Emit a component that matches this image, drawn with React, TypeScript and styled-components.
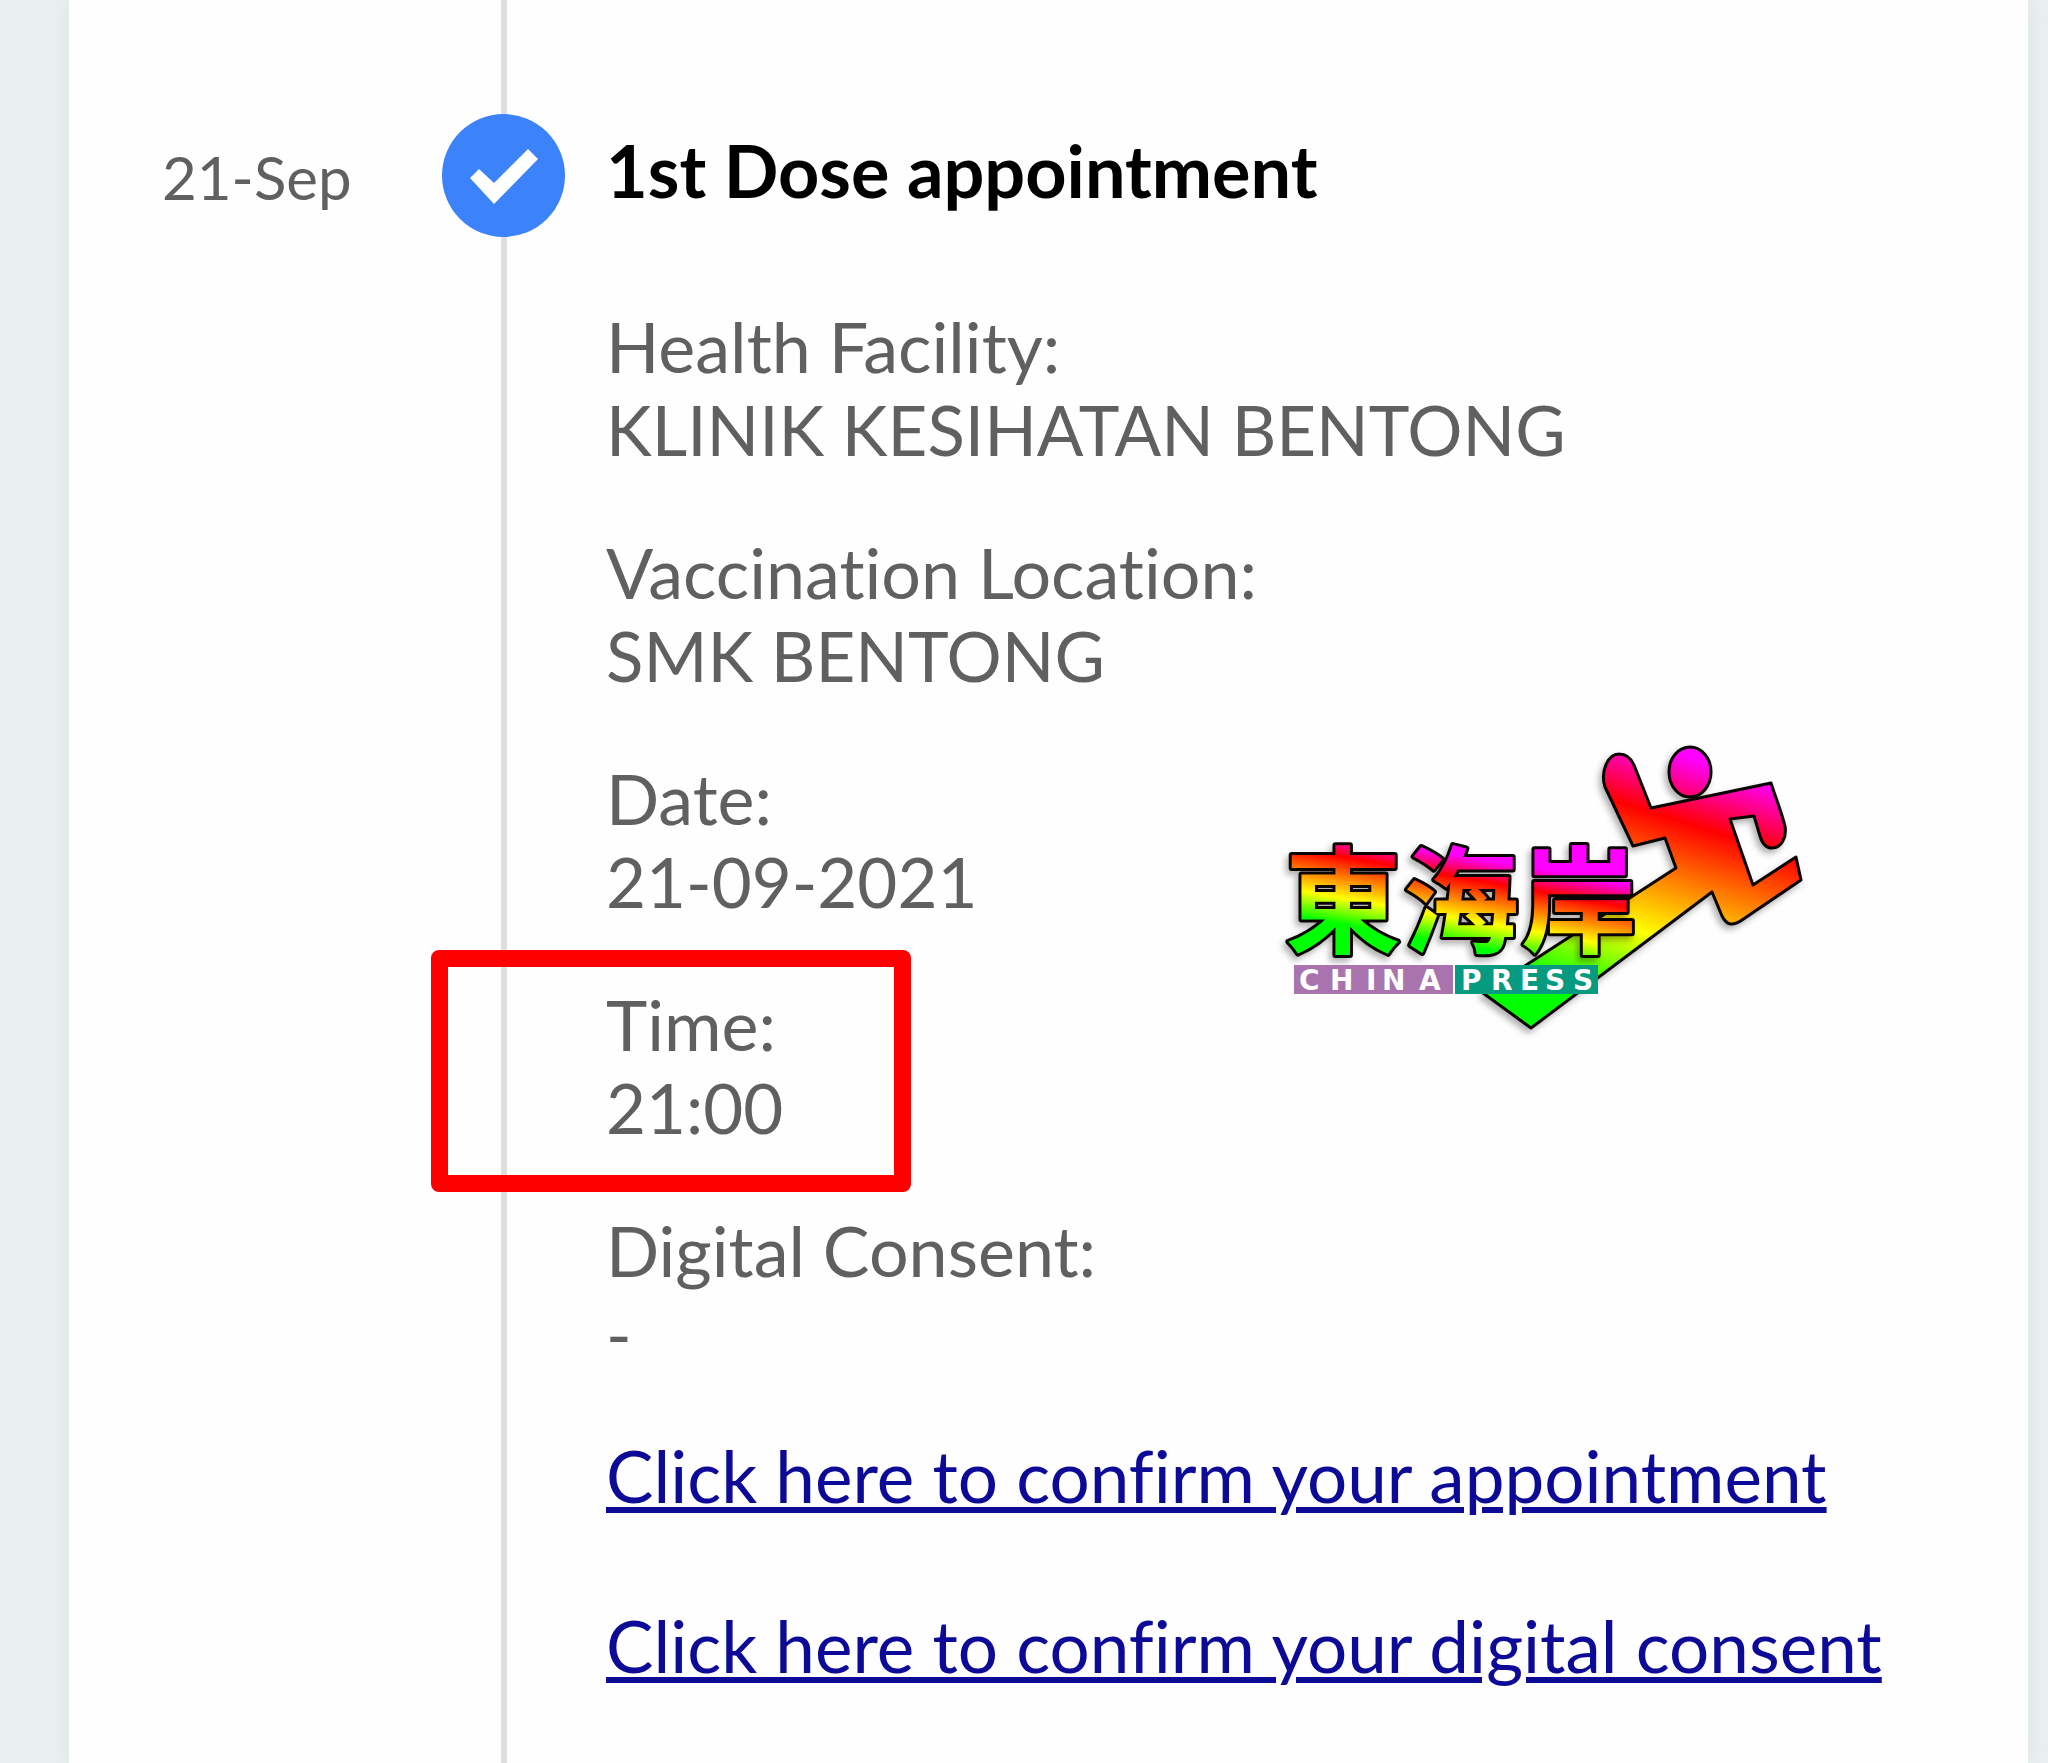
import React from "react";
import styled, { createGlobalStyle } from "styled-components";

const GlobalStyle = createGlobalStyle`
  *, *::before, *::after { box-sizing: border-box; }
  body {
    margin: 0;
    background: #eaeff0;
    font-family: Lato, "Noto Sans", sans-serif;
    font-variant-ligatures: none;
    color: #606060;
  }
`;

const Page = styled.div`
  display: flex;
  min-height: 100vh;
  padding: 0 20px 0 69px;
`;

const Card = styled.main`
  flex: 1;
  display: flex;
  background: #fefefe;
  box-shadow: 0 0 20px #dde2e2;
`;

const Entry = styled.article`
  position: relative;
  flex: 1;
  display: grid;
  grid-template-columns: 373px 123px 1fr;
`;

const EntryDate = styled.time`
  padding: 141px 0 0 93px;
  font-size: 60px;
  line-height: 72px;
`;

const Rail = styled.div`
  display: flex;
  flex-direction: column;
  align-items: center;
`;

const RailLine = styled.span<{ $fill?: boolean }>`
  width: 6px;
  height: 114px;
  flex: ${(p) => (p.$fill ? "1" : "none")};
  background: #dedede;
`;

const Marker = styled.span`
  display: flex;
  width: 123px;
  height: 123px;
  border-radius: 50%;
  background: #3b82fb;
`;

const Details = styled.div`
  padding: 128px 40px 60px 41px;
  font-size: 69px;
  line-height: 84px;
`;

const Title = styled.h2`
  margin: 0 0 92px;
  font-size: 72px;
  line-height: 84px;
  font-weight: 700;
  color: #000;
`;

const Fields = styled.dl`
  display: flex;
  flex-direction: column;
  gap: 58px;
  margin: 0 0 58px;
`;

const Field = styled.div<{ $highlight?: boolean }>`
  position: relative;
  ${(p) =>
    p.$highlight &&
    `&::after {
      content: "";
      position: absolute;
      top: -32px;
      left: -175px;
      width: 480px;
      height: 242px;
      border: 17px solid #fe0000;
      border-radius: 8px;
    }`}
`;

const Label = styled.dt`
  font-size: 70px;
`;

const Value = styled.dd`
  margin: 0;
`;

const Links = styled.nav`
  display: flex;
  flex-direction: column;
  align-items: flex-start;
  gap: 86px;
  font-size: 71px;
`;

const Link = styled.a`
  color: #0c0a96;
  text-decoration: underline;
  text-decoration-thickness: 6px;
  text-underline-offset: 4px;
`;

const LogoOverlay = styled.svg`
  position: absolute;
  top: 731px;
  left: 1201px;
  width: 560px;
  height: 320px;
  overflow: visible;
`;

const LogoShadow = styled.g`
  filter: drop-shadow(-3px 4px 3px rgba(0, 0, 0, 0.3));
`;

const LogoName = styled.text`
  font-family: "Liberation Sans", "Noto Sans CJK TC", sans-serif;
  font-size: 116px;
  font-weight: 700;
  paint-order: stroke;
`;

const LogoBanner = styled.text`
  font-family: "DejaVu Sans", sans-serif;
  font-size: 28px;
  font-weight: 700;
  fill: #fff;
`;

const stops = [
  ["0.04", "#ff00ff"],
  ["0.28", "#ff0000"],
  ["0.72", "#ffff00"],
  ["1", "#00ff00"],
];

function Logo() {
  return (
    <LogoOverlay viewBox="0 0 560 320" role="img" aria-label="東海岸 China Press">
      <defs>
        <linearGradient id="runner" gradientUnits="userSpaceOnUse" x1="450" y1="25" x2="370" y2="278">
          {stops.map(([o, c]) => <stop key={o} offset={o} stopColor={c} />)}
        </linearGradient>
        <linearGradient id="name" gradientUnits="userSpaceOnUse" x1="200" y1="122" x2="184" y2="213">
          {stops.map(([o, c]) => <stop key={o} offset={o} stopColor={c} />)}
        </linearGradient>
      </defs>
      <LogoShadow fill="url(#runner)" stroke="#0a0500" strokeWidth="3" strokeLinejoin="round">
        <path d="M381 77 L501 52 C505 65 511 79 515 95 C517 107 511 117 502 117 C495 117 492 112 490 105 L484 85 L460 88 L483 154 L526 126 L531 149 L472 189 C463 195 457 195 452 185 L442 161 L261 297 L213 262 L406 137 L395 107 L363 115 L335 56 C330 40 338 23 349 23 C357 23 361 27 364 34 Z" />
        <ellipse cx="420" cy="41" rx="21" ry="25" />
      </LogoShadow>
      <LogoShadow>
        <LogoName x="15 133 251" y="213" fill="url(#name)" stroke="#0a0500" strokeWidth="6" strokeLinejoin="round">
          東海岸
        </LogoName>
      </LogoShadow>
      <rect x="24" y="234" width="159" height="29" fill="#a974ae" />
      <rect x="185" y="234" width="143" height="29" fill="#069a80" />
      <LogoBanner x="29 60 96 112 149" y="259">CHINA</LogoBanner>
      <LogoBanner x="191 221 250 275 303" y="259">PRESS</LogoBanner>
    </LogoOverlay>
  );
}

const fields = [
  { label: "Health Facility:", value: "KLINIK KESIHATAN BENTONG" },
  { label: "Vaccination Location:", value: "SMK BENTONG" },
  { label: "Date:", value: "21-09-2021" },
  { label: "Time:", value: "21:00", highlight: true },
  { label: "Digital Consent:", value: "-" },
];

export default function App() {
  return (
    <>
      <GlobalStyle />
      <Page>
        <Card>
          <Entry>
            <EntryDate dateTime="2021-09-21">21-Sep</EntryDate>
            <Rail>
              <RailLine />
              <Marker>
                <svg viewBox="0 0 123 123" width="123" height="123" aria-hidden="true">
                  <path d="M28 64 L37 55 L52 69 L86 35 L96 45 L52 90 Z" fill="#fff" />
                </svg>
              </Marker>
              <RailLine $fill />
            </Rail>
            <Details>
              <Title>1st Dose appointment</Title>
              <Fields>
                {fields.map((f) => (
                  <Field key={f.label} $highlight={f.highlight}>
                    <Label>{f.label}</Label>
                    <Value>{f.value}</Value>
                  </Field>
                ))}
              </Fields>
              <Links>
                <Link href="#appointment">Click here to confirm your appointment</Link>
                <Link href="#consent">Click here to confirm your digital consent</Link>
              </Links>
            </Details>
            <Logo />
          </Entry>
        </Card>
      </Page>
    </>
  );
}
